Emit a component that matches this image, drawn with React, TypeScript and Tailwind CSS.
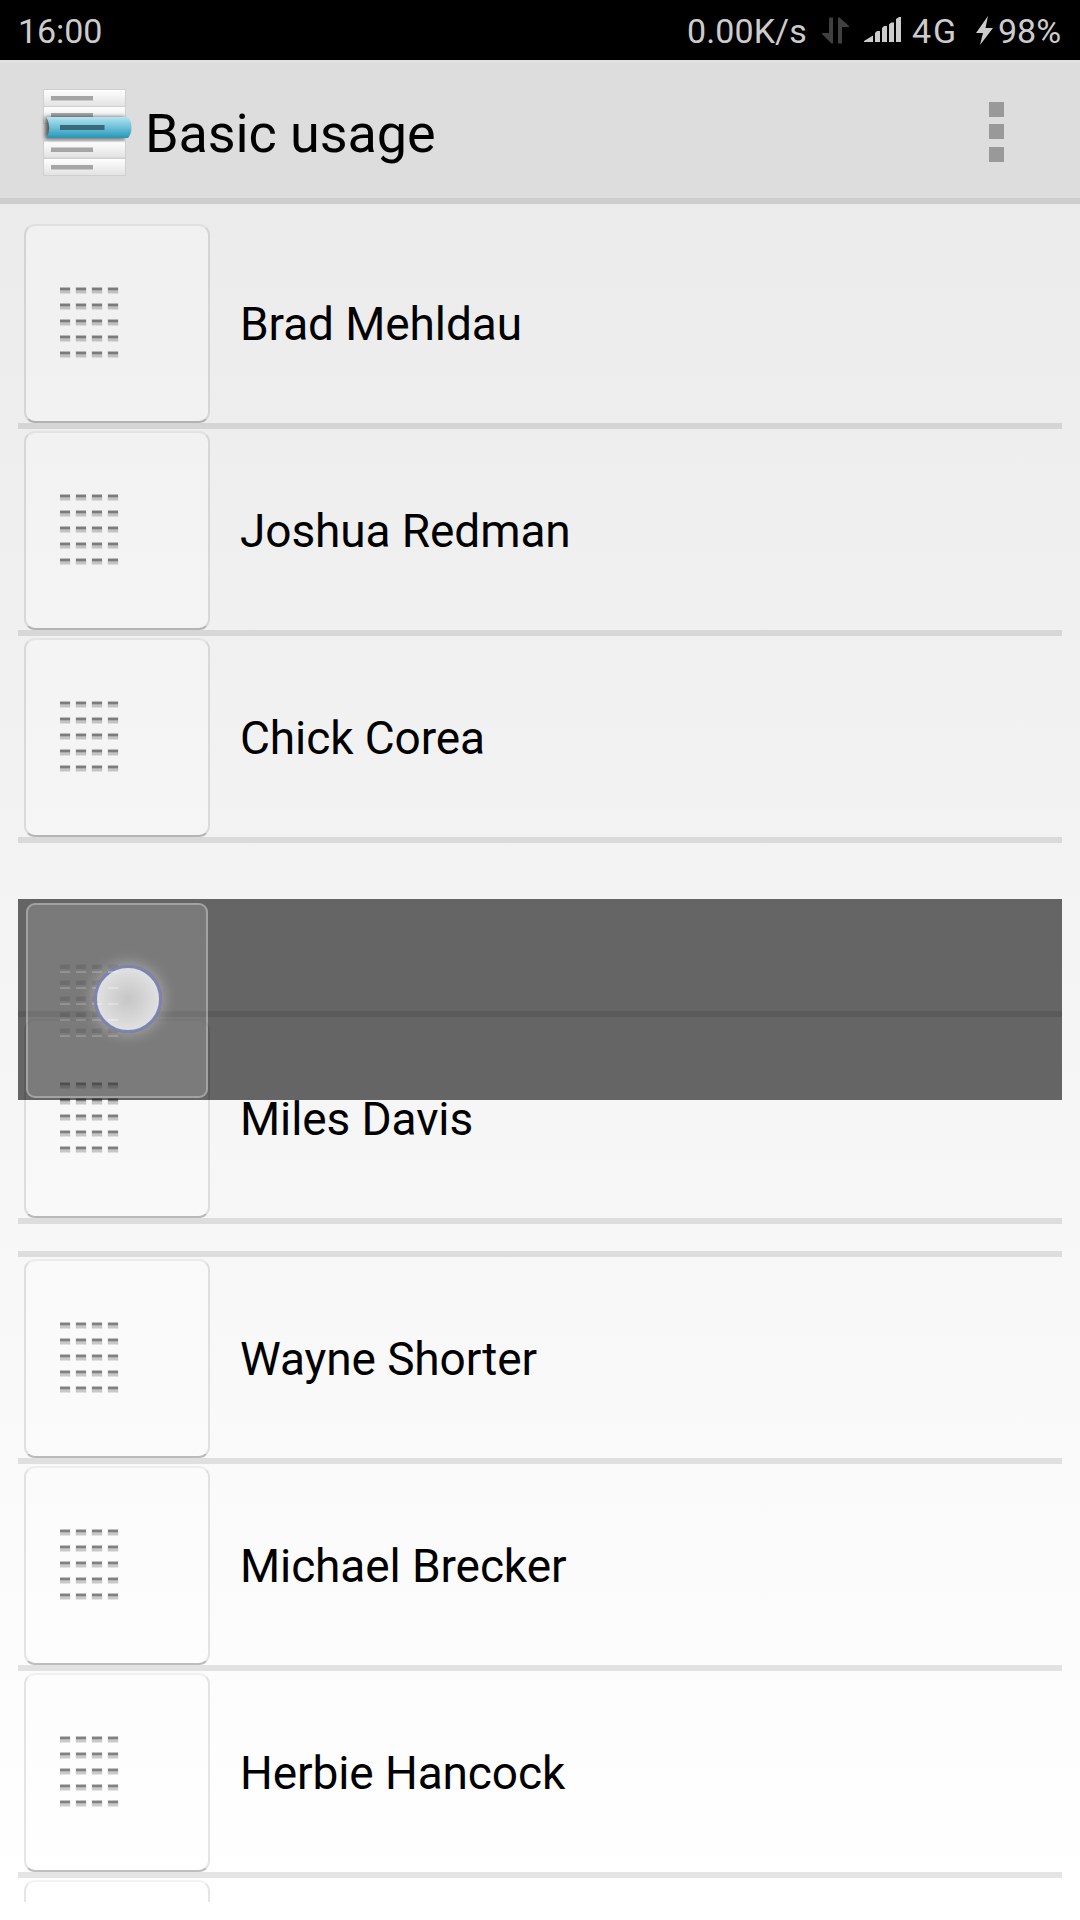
const COLS = [0, 1, 2, 3];
const ROWS = [0, 1, 2, 3, 4];

function Grip() {
  return (
    <svg width="60" height="74" viewBox="0 0 60 74" className="block">
      {ROWS.map((r) =>
        COLS.map((c) => (
          <g key={`${r}-${c}`}>
            <rect x={c * 16 - 0.2} y={r * 16 + 0.3} width="10.4" height="6.2" fill="#000" opacity="0.2" />
            <rect x={c * 16} y={r * 16 + 0.7} width="10" height="2.6" fill="#000" opacity="0.36" />
          </g>
        )),
      )}
    </svg>
  );
}

function FadedGrip() {
  return (
    <svg width="60" height="74" viewBox="0 0 60 74" className="block">
      {ROWS.map((r) =>
        COLS.map((c) => (
          <g key={`${r}-${c}`}>
            <rect x={c * 16} y={r * 16 + 0.5} width="10" height="4.5" fill="#000" opacity="0.1" />
            <rect x={c * 16} y={r * 16 + 7} width="10" height="2" fill="#fff" opacity="0.18" />
          </g>
        )),
      )}
    </svg>
  );
}

function TouchPoint() {
  return (
    <div className="absolute top-[66px] left-[76px] size-[68px] rounded-full border-[3px] border-[#7d84b4] bg-radial from-[#c6c6c6] to-[#e0e0e0] to-70% shadow-[0_0_13px_3px_rgba(255,255,255,0.28)]">
      <svg width="62" height="62" viewBox="0 0 62 62" className="block" fill="#fff" opacity="0.3">
        <path d="M11 3h10v2H11zM11 19h10v2H11zM11 35h10v2H11zM11 51h10v2H11zM0 35h5v2H0z" />
      </svg>
    </div>
  );
}

function Handle() {
  return (
    <div className="mt-[2px] ml-[6px] h-[199px] w-[186px] shrink-0 rounded-[11px] border-2 border-t-black/[0.05] border-r-black/10 border-b-black/25 border-l-black/10 bg-white/25 bg-clip-padding pt-[61px] pl-[34px]">
      <Grip />
    </div>
  );
}

function Row({ name }: { name?: string }) {
  return (
    <div className="flex h-[201px] shrink-0">
      <Handle />
      {name && (
        <div className="flex items-center pt-[3px] pl-[30px] text-[46px] leading-[56px] tracking-[-0.1px] whitespace-nowrap text-black">
          {name}
        </div>
      )}
    </div>
  );
}

function Divider() {
  return <div className="h-[6px] shrink-0 bg-black/10" />;
}

function Logo() {
  return (
    <svg width="96" height="96" viewBox="0 0 96 96" className="mt-[2px] block">
      <defs>
        <linearGradient id="paper" x1="0" y1="0" x2="0" y2="1">
          <stop offset="0" stopColor="#fff" />
          <stop offset="1" stopColor="#e2e2e2" />
        </linearGradient>
        <linearGradient id="blue" x1="0" y1="0" x2="0" y2="1">
          <stop offset="0" stopColor="#b5e4f2" />
          <stop offset="0.45" stopColor="#74c4da" />
          <stop offset="1" stopColor="#2596b8" />
        </linearGradient>
        <filter id="soft" x="-20%" y="-50%" width="140%" height="200%">
          <feGaussianBlur stdDeviation="2.2" />
        </filter>
        <clipPath id="sheet">
          <rect x="0" y="0" width="89.5" height="96" />
        </clipPath>
      </defs>
      {[5.5, 22.5, 57, 74.5].map((y) => (
        <g key={y}>
          <rect x="7.5" y={y} width="82" height="17" fill="url(#paper)" stroke="#cfcfcf" />
          <rect x="15" y={y + 6.5} width="42" height="4.5" fill="#a5a5a5" />
        </g>
      ))}
      <g clipPath="url(#sheet)">
        <path d="M9 33H89V55H9z" fill="#000" opacity="0.6" filter="url(#soft)" />
      </g>
      <path d="M10.500 33H92Q95.500 37 95.500 43.500T92 54H10.500Q16 44 10.500 33z" fill="url(#blue)" />
      <rect x="24" y="41" width="44.500" height="5" fill="#39697a" />
    </svg>
  );
}

function StatusBar() {
  return (
    <div className="flex h-[60px] items-center justify-between bg-black px-[18px] text-[34px] leading-[60px] text-[#cccccc]">
      <div className="pt-[2px] tracking-[-0.1px]">16:00</div>
      <div className="flex items-center">
        <span className="w-[119px] pt-[2px] tracking-[0.1px] whitespace-nowrap">0.00K/s</span>
        <svg width="28" height="27" viewBox="0 0 28 27" className="ml-[16px]" fill="#404040">
          <path d="M7 1.500Q7 .5 8.500 .5H11V26.500H9.500L0 17V16H7z" />
          <path d="M16 .5H17.500L27 9V10H20V26.500H16z" />
        </svg>
        <svg width="38" height="26" viewBox="0 0 38 26" className="ml-[14px]" fill="#cccccc">
          <path d="M0 25V24L9 18.500V25zM11 16L13 14H16V25H11zM18 11L20 9H23V25H18zM25 7.500L27 5.500H30V25H25zM32 2L35 0H37V25H32z" />
        </svg>
        <span className="ml-[10px] w-[47px] pt-[2px] tracking-[2px]">4G</span>
        <svg width="17" height="29" viewBox="0 0 17 29" className="ml-[17px]" fill="#cccccc">
          <path d="M12 0L0 17H7L4 29L17 12H9.500z" />
        </svg>
        <span className="ml-[5px] w-[64px] pt-[2px]">98%</span>
      </div>
    </div>
  );
}

export default function App() {
  return (
    <div className="flex h-[1920px] w-[1080px] flex-col overflow-hidden bg-linear-to-b from-[#e9e9e9] to-white font-['Roboto',sans-serif]">
      <StatusBar />
      <header className="flex h-[144px] shrink-0 items-center border-t-[3px] border-b-[6px] border-t-[#e1e1e1] border-b-[#cdcdcd] bg-[#dddddd] pl-[36px]">
        <Logo />
        <h1 className="ml-[13px] pt-[7px] text-[54px] leading-[64px] font-normal tracking-[-0.1px] text-black">
          Basic usage
        </h1>
        <div className="mt-[2px] mr-[76px] ml-auto flex flex-col gap-[7.500px]">
          <div className="size-[15px] bg-[#999999]" />
          <div className="size-[15px] bg-[#999999]" />
          <div className="size-[15px] bg-[#999999]" />
        </div>
      </header>
      <main className="relative mx-[18px] flex h-[1698px] flex-col overflow-hidden pt-[18px]">
        <Row name="Brad Mehldau" />
        <Divider />
        <Row name="Joshua Redman" />
        <Divider />
        <Row name="Chick Corea" />
        <Divider />
        <div className="h-[168px] shrink-0" />
        <Divider />
        <Row name="Miles Davis" />
        <Divider />
        <div className="h-[27px] shrink-0" />
        <Divider />
        <Row name="Wayne Shorter" />
        <Divider />
        <Row name="Michael Brecker" />
        <Divider />
        <Row name="Herbie Hancock" />
        <Divider />
        <Row />
        <div className="absolute top-[695px] left-0 h-[201px] w-full bg-black/[0.588]">
          <div className="mt-[4px] ml-[8px] h-[195px] w-[182px] rounded-[9px] border-2 border-white/30 bg-white/[0.14] pt-[59px] pl-[32px]">
            <FadedGrip />
          </div>
          <TouchPoint />
        </div>
      </main>
    </div>
  );
}
